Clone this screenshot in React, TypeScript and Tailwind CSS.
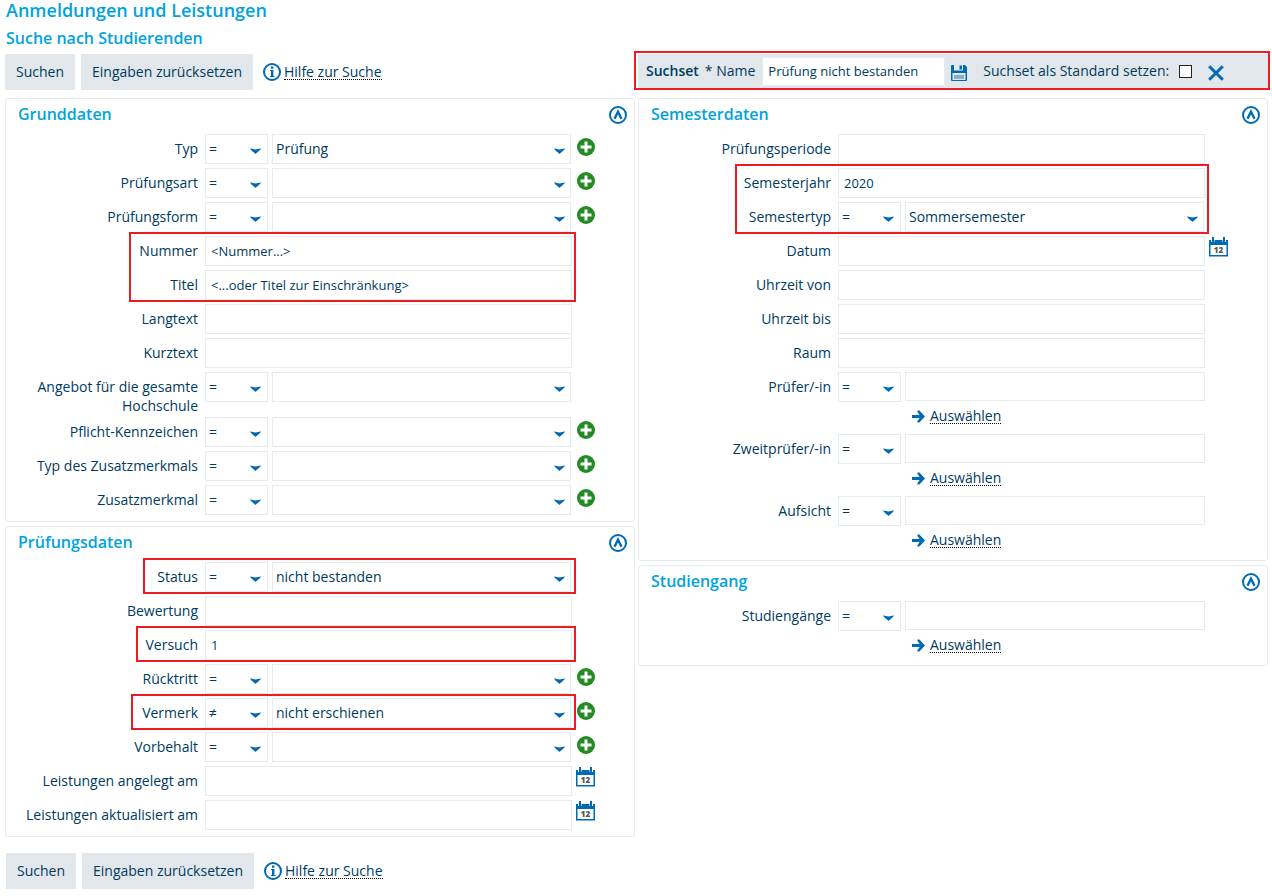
import { ReactNode, useId, useState } from "react"

type FieldProps = {
    label: string,
    children: (id: string) => ReactNode,
    action?: ReactNode
}

type SelectRowProps = {
    label: string,
    op?: string,
    value?: string,
    add?: boolean
}

type TextRowProps = {
    label: string,
    value?: string,
    date?: boolean
}

const boxStyle = "appearance-none rounded-none border border-[#e6ecee] bg-white text-[#003b5f] outline-none focus:border-[#006ab3]"

function ChevronIcon({ className }: { className: string }) {
    return (
        <svg className={`pointer-events-none absolute top-[14px] ${className}`} width="11" height="6" viewBox="0 0 11 6" fill="#006ab3" aria-hidden="true">
            <path d="M0 0.6 C2 0.4 3.5 1.4 5.5 1.4 C7.5 1.4 9 0.4 11 0.6 C10 2.8 7.6 4.2 5.5 6 C3.4 4.2 1 2.8 0 0.6 Z" />
        </svg>
    )
}

function PlusIcon() {
    return (
        <svg width="18" height="18" viewBox="0 0 18 18" aria-hidden="true">
            <circle cx="9" cy="9" r="9" fill="#228b22" />
            <path d="M9 3.5 V14.5 M3.5 9 H14.5" stroke="#fff" strokeWidth="3" />
        </svg>
    )
}

function CalendarIcon() {
    return (
        <svg width="19" height="20" viewBox="0 0 19 20" aria-hidden="true">
            <path d="M0 3 H19 V19.5 H0 Z" fill="#006ab3" />
            <rect x="1.5" y="8" width="16" height="10" fill="#fff" />
            <path d="M4 0 V5 M15 0 V5" stroke="#fff" strokeWidth="4" />
            <path d="M4 0 V4 H5.5 M15 0 V4 H13.5" stroke="#006ab3" strokeWidth="2" fill="none" />
            <text x="9.5" y="16" textAnchor="middle" fontSize="8" fontWeight="800" fill="#555">12</text>
        </svg>
    )
}

function CollapseIcon({ open }: { open: boolean }) {
    return (
        <svg className={open ? "" : "rotate-180"} width="18" height="18" viewBox="0 0 18 18" fill="none" stroke="#006ab3" aria-hidden="true">
            <circle cx="9" cy="9" r="8" strokeWidth="2" />
            <path d="M5.5 12.8 L9 5.8 L12.5 12.8" strokeWidth="2.4" />
        </svg>
    )
}

function InfoIcon() {
    return (
        <svg width="18" height="18" viewBox="0 0 18 18" fill="none" aria-hidden="true">
            <circle cx="9" cy="9" r="8" stroke="#006ab3" strokeWidth="2" />
            <rect x="8" y="3.5" width="2.4" height="2.2" fill="#006ab3" />
            <path d="M7 7 H10.4 V13 H11.5 V14 H7 V13 H8 V8 H7 Z" fill="#006ab3" />
        </svg>
    )
}

function SaveIcon() {
    return (
        <svg width="16" height="16" viewBox="0 0 16 16" aria-hidden="true">
            <path d="M0 1 Q0 0 1 0 H14 L16 2 V15 Q16 16 15 16 H1 Q0 16 0 15 Z" fill="#006ab3" />
            <rect x="3" y="0" width="9" height="5.5" fill="#e1e7eb" />
            <rect x="8.5" y="0.5" width="2.5" height="4" fill="#006ab3" />
            <rect x="1.5" y="8" width="13" height="7" fill="#e1e7eb" />
            <rect x="3" y="10" width="10" height="4" fill="#80b0d4" />
        </svg>
    )
}

function CloseIcon() {
    return (
        <svg width="16" height="16" viewBox="0 0 16 16" stroke="#006ab3" strokeWidth="3" aria-hidden="true">
            <path d="M1.2 1.2 L14.8 14.8 M14.8 1.2 L1.2 14.8" />
        </svg>
    )
}

function ArrowIcon() {
    return (
        <svg width="13" height="13" viewBox="0 0 13 13" aria-hidden="true">
            <path d="M0 5 H7.6 L5.4 1.8 V0.4 H7.4 L13 6.5 L7.4 12.6 H5.4 V11.2 L7.6 8 H0 Z" fill="#006ab3" />
        </svg>
    )
}

function Field({ label, children, action }: FieldProps) {
    const id = useId()

    return (
        <div className="flex items-start">
            <label htmlFor={id} className="-mb-[2px] w-[199px] shrink-0 pt-[5px] pr-[7px] pl-4 text-right leading-[19px]">{label}</label>
            <div className="min-w-0 flex-1">{children(id)}</div>
            <div className="w-[62px] shrink-0">{action}</div>
        </div>
    )
}

function OperatorSelect({ label, op = "=" }: { label: string, op?: string }) {
    return (
        <div className="relative w-[63px] shrink-0">
            <select aria-label={`${label} Operator`} defaultValue={op} className={`${boxStyle} h-[30px] w-full px-[3px]`}>
                <option>=</option>
                <option>≠</option>
            </select>
            <ChevronIcon className="right-[7px]" />
        </div>
    )
}

function SelectRow({ label, op, value = "", add }: SelectRowProps) {
    return (
        <Field
            label={label}
            action={add && <button type="button" aria-label={`${label} hinzufügen`} className="mt-1 ml-[5px] block cursor-pointer"><PlusIcon /></button>}
        >
            {(id) => (
                <div className="mr-px flex gap-1">
                    <OperatorSelect label={label} op={op} />
                    <div className="relative min-w-0 flex-1">
                        <select id={id} defaultValue={value} className={`${boxStyle} h-[30px] w-full px-[3px]`}>
                            <option value=""></option>
                            {value && <option>{value}</option>}
                        </select>
                        <ChevronIcon className="right-[6px]" />
                    </div>
                </div>
            )}
        </Field>
    )
}

function TextRow({ label, value, date }: TextRowProps) {
    return (
        <Field
            label={label}
            action={date && <button type="button" aria-label={`${label}: Kalender`} className="mt-px ml-1 block cursor-pointer"><CalendarIcon /></button>}
        >
            {(id) => <input id={id} type="text" defaultValue={value} className={`${boxStyle} block h-[30px] w-full px-[5px] text-[13px]`} />}
        </Field>
    )
}

function ChooseRow({ label }: { label: string }) {
    return (
        <Field label={label}>
            {(id) => (
                <div className="flex gap-1">
                    <OperatorSelect label={label} />
                    <div className="h-[58px] min-w-0 flex-1">
                        <input id={id} type="text" className={`${boxStyle} block h-[29px] w-full px-[5px] text-[13px]`} />
                        <a href="#" className="mt-2 ml-[7px] inline-flex items-center gap-[5px]">
                            <ArrowIcon />
                            <span className="border-b border-dotted border-black leading-[14px]">Auswählen</span>
                        </a>
                    </div>
                </div>
            )}
        </Field>
    )
}

// red frame around a group of rows, "left" sets where the frame starts
function Highlight({ left, children }: { left: string, children: ReactNode }) {
    return (
        <div className="relative flex flex-col gap-1">
            {children}
            <div className={`pointer-events-none absolute -top-1 right-[58px] -bottom-[2px] border-2 border-[#ed1c24] ${left}`} />
        </div>
    )
}

function Panel({ title, children }: { title: string, children: ReactNode }) {
    const [open, setOpen] = useState(true)

    return (
        <section className="rounded-[3px] border border-[#e6ecee] pb-[6px]">
            <div className="flex h-[35px] items-start justify-between pt-[7px] pr-[7px] pl-3">
                <h3 className="text-base leading-4 font-semibold text-[#00a3dc]">{title}</h3>
                <button type="button" aria-label={title} aria-expanded={open} className="cursor-pointer" onClick={() => setOpen(!open)}>
                    <CollapseIcon open={open} />
                </button>
            </div>
            {open && <div className="flex flex-col gap-1">{children}</div>}
        </section>
    )
}

function Toolbar() {
    return (
        <div className="flex items-center">
            <button type="submit" className="h-9 cursor-pointer rounded-[1px] bg-[#e1e7eb] px-[11px]">Suchen</button>
            <button type="reset" className="ml-[6px] h-9 cursor-pointer rounded-[1px] bg-[#e1e7eb] px-[11px]">Eingaben zurücksetzen</button>
            <a href="#" className="ml-[10px] flex items-center gap-[3px]">
                <InfoIcon />
                <span className="border-b border-dotted border-black leading-[14px]">Hilfe zur Suche</span>
            </a>
        </div>
    )
}

function SearchSetBar() {
    return (
        <div className="relative flex h-[34px] items-center bg-[#e1e7eb] pl-2">
            <span className="font-semibold">Suchset</span>
            <label htmlFor="setName" className="ml-[6px]">* Name</label>
            <input id="setName" type="text" defaultValue="Prüfung nicht bestanden" className={`${boxStyle} ml-[7px] h-[29px] w-[183px] px-[5px] text-[13px]`} />
            <button type="button" aria-label="Suchset speichern" className="mt-[3px] ml-[6px] cursor-pointer"><SaveIcon /></button>
            <label htmlFor="setDefault" className="ml-4">Suchset als Standard setzen:</label>
            <input id="setDefault" type="checkbox" className="ml-[10px] size-[13px] appearance-none border border-[#222] bg-white checked:bg-[#006ab3]" />
            <button type="button" aria-label="Schließen" className="mt-[3px] ml-4 cursor-pointer"><CloseIcon /></button>
            <div className="pointer-events-none absolute -top-[3px] -right-[2px] -bottom-[2px] -left-1 border-2 border-[#ed1c24]" />
        </div>
    )
}

export default function App() {
    return (
        <form
            className="min-h-screen bg-white pr-1 pb-2 pl-[5px] font-['Open_Sans','Noto_Sans',sans-serif] text-sm text-[#003b5f]"
            onSubmit={(e) => e.preventDefault()}
        >
            <h1 className="pl-px text-lg leading-5 font-semibold text-[#00a3dc]">Anmeldungen und Leistungen</h1>
            <h2 className="mt-2 pl-px text-base leading-5 font-semibold text-[#00a3dc]">Suche nach Studierenden</h2>

            <div className="mt-[6px] grid grid-cols-2 items-start gap-x-[3px]">
                <Toolbar />
                <SearchSetBar />
            </div>

            <div className="mt-2 grid grid-cols-2 items-start gap-x-[3px]">
                <div className="flex flex-col gap-1">
                    <Panel title="Grunddaten">
                        <SelectRow label="Typ" value="Prüfung" add />
                        <SelectRow label="Prüfungsart" add />
                        <SelectRow label="Prüfungsform" add />
                        <Highlight left="left-[123px]">
                            <TextRow label="Nummer" value="<Nummer...>" />
                            <TextRow label="Titel" value="<...oder Titel zur Einschränkung>" />
                        </Highlight>
                        <TextRow label="Langtext" />
                        <TextRow label="Kurztext" />
                        <SelectRow label="Angebot für die gesamte Hochschule" />
                        <SelectRow label="Pflicht-Kennzeichen" add />
                        <SelectRow label="Typ des Zusatzmerkmals" add />
                        <SelectRow label="Zusatzmerkmal" add />
                    </Panel>

                    <Panel title="Prüfungsdaten">
                        <Highlight left="left-[137px]">
                            <SelectRow label="Status" value="nicht bestanden" />
                        </Highlight>
                        <TextRow label="Bewertung" />
                        <Highlight left="left-[130px]">
                            <TextRow label="Versuch" value="1" />
                        </Highlight>
                        <SelectRow label="Rücktritt" add />
                        <Highlight left="left-[125px]">
                            <SelectRow label="Vermerk" op="≠" value="nicht erschienen" add />
                        </Highlight>
                        <SelectRow label="Vorbehalt" add />
                        <TextRow label="Leistungen angelegt am" date />
                        <TextRow label="Leistungen aktualisiert am" date />
                    </Panel>
                </div>

                <div className="flex flex-col gap-1">
                    <Panel title="Semesterdaten">
                        <TextRow label="Prüfungsperiode" />
                        <Highlight left="left-[96px]">
                            <TextRow label="Semesterjahr" value="2020" />
                            <SelectRow label="Semestertyp" value="Sommersemester" />
                        </Highlight>
                        <TextRow label="Datum" date />
                        <TextRow label="Uhrzeit von" />
                        <TextRow label="Uhrzeit bis" />
                        <TextRow label="Raum" />
                        <ChooseRow label="Prüfer/-in" />
                        <ChooseRow label="Zweitprüfer/-in" />
                        <ChooseRow label="Aufsicht" />
                    </Panel>

                    <Panel title="Studiengang">
                        <ChooseRow label="Studiengänge" />
                    </Panel>
                </div>
            </div>

            <div className="mt-4 pl-px">
                <Toolbar />
            </div>
        </form>
    )
}
